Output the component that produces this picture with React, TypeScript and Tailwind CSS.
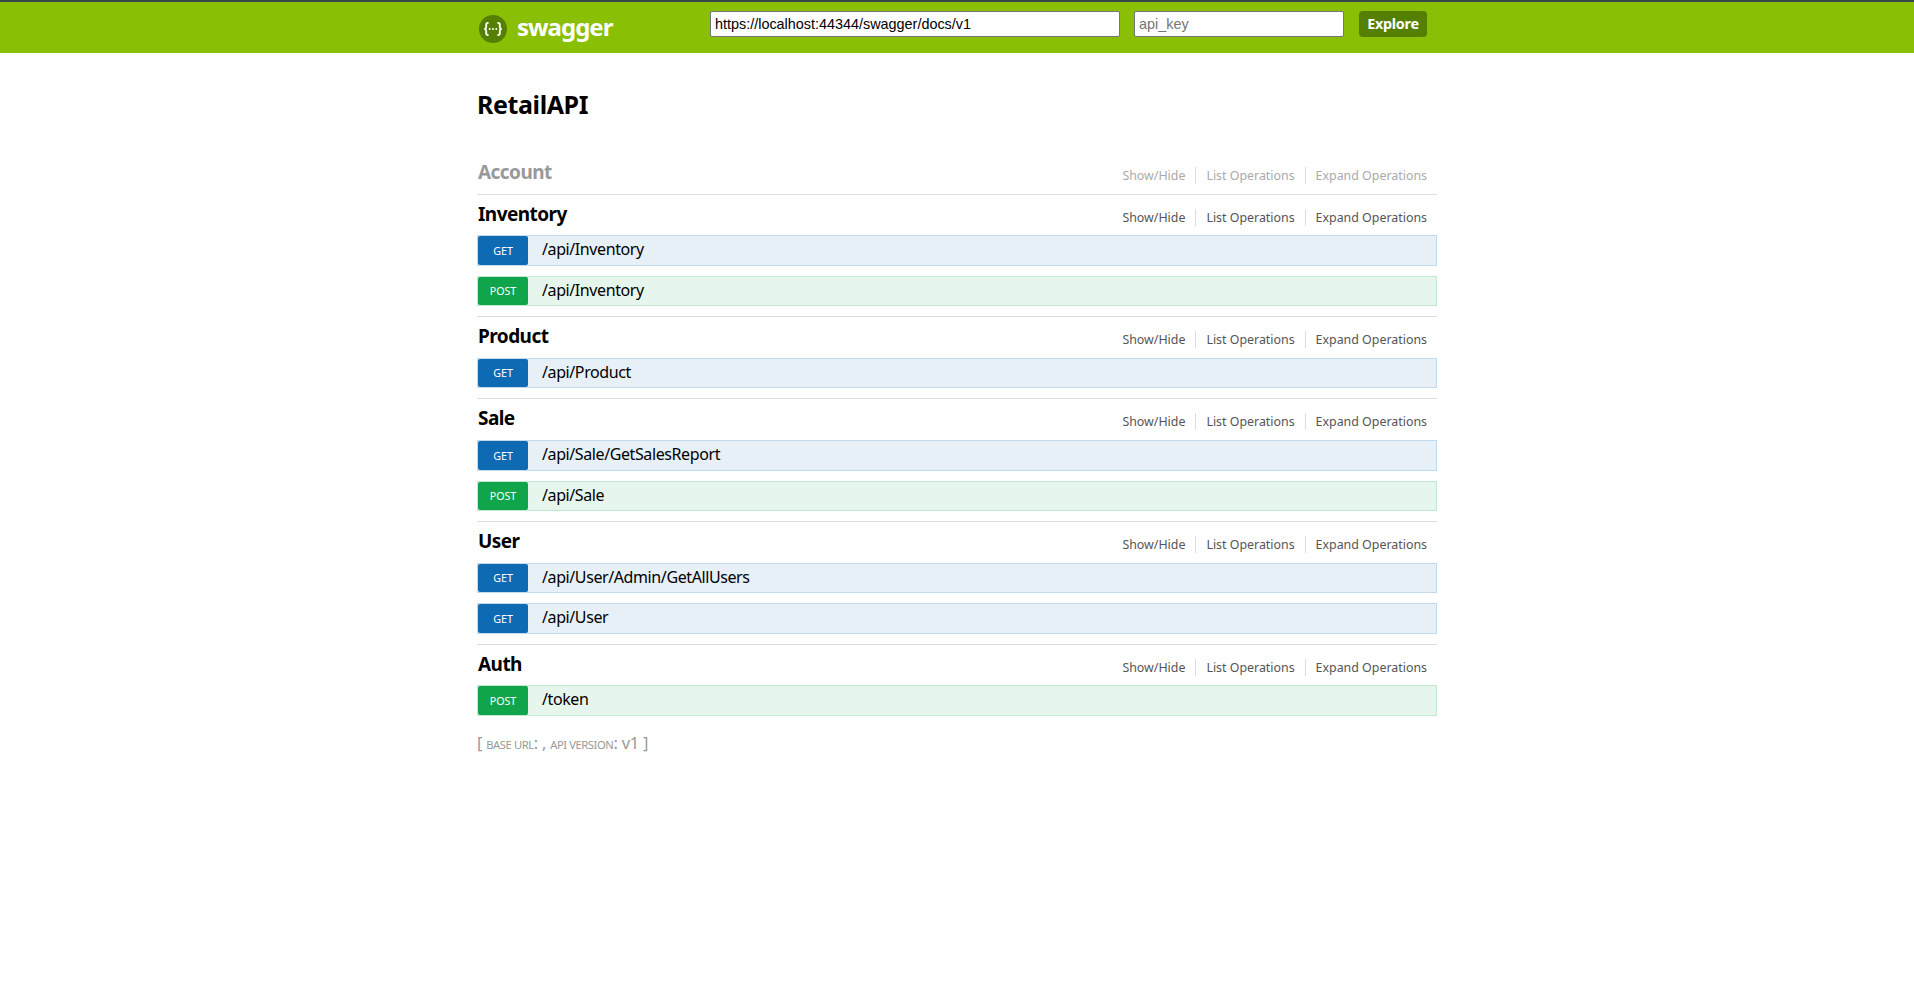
type Operation = { method: "GET" | "POST"; path: string; height: string };
type Resource = { name: string; muted?: boolean; head: string; operations: Operation[] };

const resources: Resource[] = [
  { name: "Account", muted: true, head: "h-[41px]", operations: [] },
  {
    name: "Inventory",
    head: "h-10",
    operations: [
      { method: "GET", path: "/api/Inventory", height: "h-[31px]" },
      { method: "POST", path: "/api/Inventory", height: "h-[30px]" },
    ],
  },
  {
    name: "Product",
    head: "h-[41px]",
    operations: [{ method: "GET", path: "/api/Product", height: "h-[30px]" }],
  },
  {
    name: "Sale",
    head: "h-[41px]",
    operations: [
      { method: "GET", path: "/api/Sale/GetSalesReport", height: "h-[31px]" },
      { method: "POST", path: "/api/Sale", height: "h-[30px]" },
    ],
  },
  {
    name: "User",
    head: "h-[41px]",
    operations: [
      { method: "GET", path: "/api/User/Admin/GetAllUsers", height: "h-[30px]" },
      { method: "GET", path: "/api/User", height: "h-[31px]" },
    ],
  },
  {
    name: "Auth",
    head: "h-10",
    operations: [{ method: "POST", path: "/token", height: "h-[31px]" }],
  },
];

function Logo() {
  return (
    <svg className="mt-[13px] size-7 shrink-0" viewBox="0 0 28 28" fill="none">
      <circle cx="14" cy="14" r="14" fill="#547f00" />
      <g stroke="#fff" strokeWidth="1.9">
        <path d="M9.600 7.900H9c-1.300 0-1.800.6-1.800 1.800v2.200c0 1.200-.5 1.900-1.800 2.100 1.300.2 1.800.9 1.800 2.100v2.200c0 1.200.5 1.800 1.800 1.800h.6" />
        <path d="M18.400 7.900h.6c1.300 0 1.800.6 1.800 1.800v2.200c0 1.200.5 1.900 1.800 2.100-1.300.2-1.800.9-1.800 2.100v2.200c0 1.200-.5 1.800-1.800 1.800h-.6" />
      </g>
      <g fill="#fff">
        <circle cx="10.700" cy="14" r="1" />
        <circle cx="14" cy="14" r="1" />
        <circle cx="17.300" cy="14" r="1" />
      </g>
    </svg>
  );
}

function OperationRow({ method, path, height }: Operation) {
  const get = method === "GET";
  return (
    <li
      className={`flex border ${height} ${
        get ? "border-[#c3d9ec] bg-[#e7f0f7]" : "border-[#c3e8d1] bg-[#e7f6ec]"
      }`}
    >
      <span
        className={`flex w-[50px] items-center justify-center rounded-xs pt-px text-[10.7px] text-white ${
          get ? "bg-[#0f6ab4]" : "bg-[#10a54a]"
        }`}
      >
        {method}
      </span>
      <span className="pl-3.5 text-[16px] leading-[27px] tracking-[-0.4px] text-black">{path}</span>
    </li>
  );
}

function ResourceSection({ resource }: { resource: Resource }) {
  const { name, muted, head, operations } = resource;
  return (
    <li className="border-b border-[#dddddd] last:border-b-0">
      <div className={`flex justify-between ${head}`}>
        <h2
          className={`pl-px pt-1.5 text-[19px] leading-[26px] font-bold tracking-[-0.55px] ${
            muted ? "text-[#999999]" : "text-black"
          }`}
        >
          {name}
        </h2>
        <ul
          className={`flex pt-3.5 pr-2.5 text-[12.400px] leading-[17px] ${
            muted ? "text-[#aaaaaa]" : "text-[#555555]"
          }`}
        >
          <li className="h-[17px] border-r border-[#dddddd] px-2.5">Show/Hide</li>
          <li className="h-[17px] border-r border-[#dddddd] px-2.5">List Operations</li>
          <li className="h-[17px] pl-2.5">Expand Operations</li>
        </ul>
      </div>
      {operations.length > 0 && (
        <ul className="flex flex-col gap-2.5 pb-2.5">
          {operations.map((op) => (
            <OperationRow key={op.method + op.path} {...op} />
          ))}
        </ul>
      )}
    </li>
  );
}

export default function App() {
  return (
    <div className="min-h-screen bg-white font-['Noto_Sans',sans-serif]">
      <header className="h-[53px] border-t-2 border-[#36474b] bg-[#89bf04]">
        <div className="mx-auto flex w-[960px] pl-0.5">
          <Logo />
          <span className="w-[203px] pl-2.5 text-[24px] leading-[50px] font-bold tracking-[-1px] text-white">
            swagger
          </span>
          <input
            className="mt-[9px] h-[26px] w-[410px] rounded-xs border border-[#767676] bg-white pl-1 font-['Liberation_Sans',sans-serif] text-[14.400px] text-black"
            defaultValue="https://localhost:44344/swagger/docs/v1"
          />
          <input
            className="mt-[9px] ml-3.5 h-[26px] w-[210px] rounded-xs border border-[#767676] bg-white pl-1 font-['Liberation_Sans',sans-serif] text-[14.400px] placeholder:text-[#757575]"
            placeholder="api_key"
          />
          <button className="mt-[9px] ml-[15px] h-[26px] w-[68px] rounded-sm bg-[#547f00] text-[14.400px] leading-[26px] font-bold tracking-[-0.3px] text-white">
            Explore
          </button>
        </div>
      </header>
      <main className="mx-auto w-[960px] pt-[33px]">
        <h1 className="text-[25px] leading-9 font-bold tracking-[-0.4px] text-black">RetailAPI</h1>
        <ul className="pt-[31px]">
          {resources.map((resource) => (
            <ResourceSection key={resource.name} resource={resource} />
          ))}
        </ul>
        <p className="pt-1 text-[16.500px] leading-[26px] tracking-[-0.25px] text-[#999999]">
          [ <span className="text-[11.200px] tracking-[-0.4px] uppercase">base url</span>: ,{" "}
          <span className="text-[11.200px] tracking-[-0.4px] uppercase">api version</span>: v1 ]
        </p>
      </main>
    </div>
  );
}
